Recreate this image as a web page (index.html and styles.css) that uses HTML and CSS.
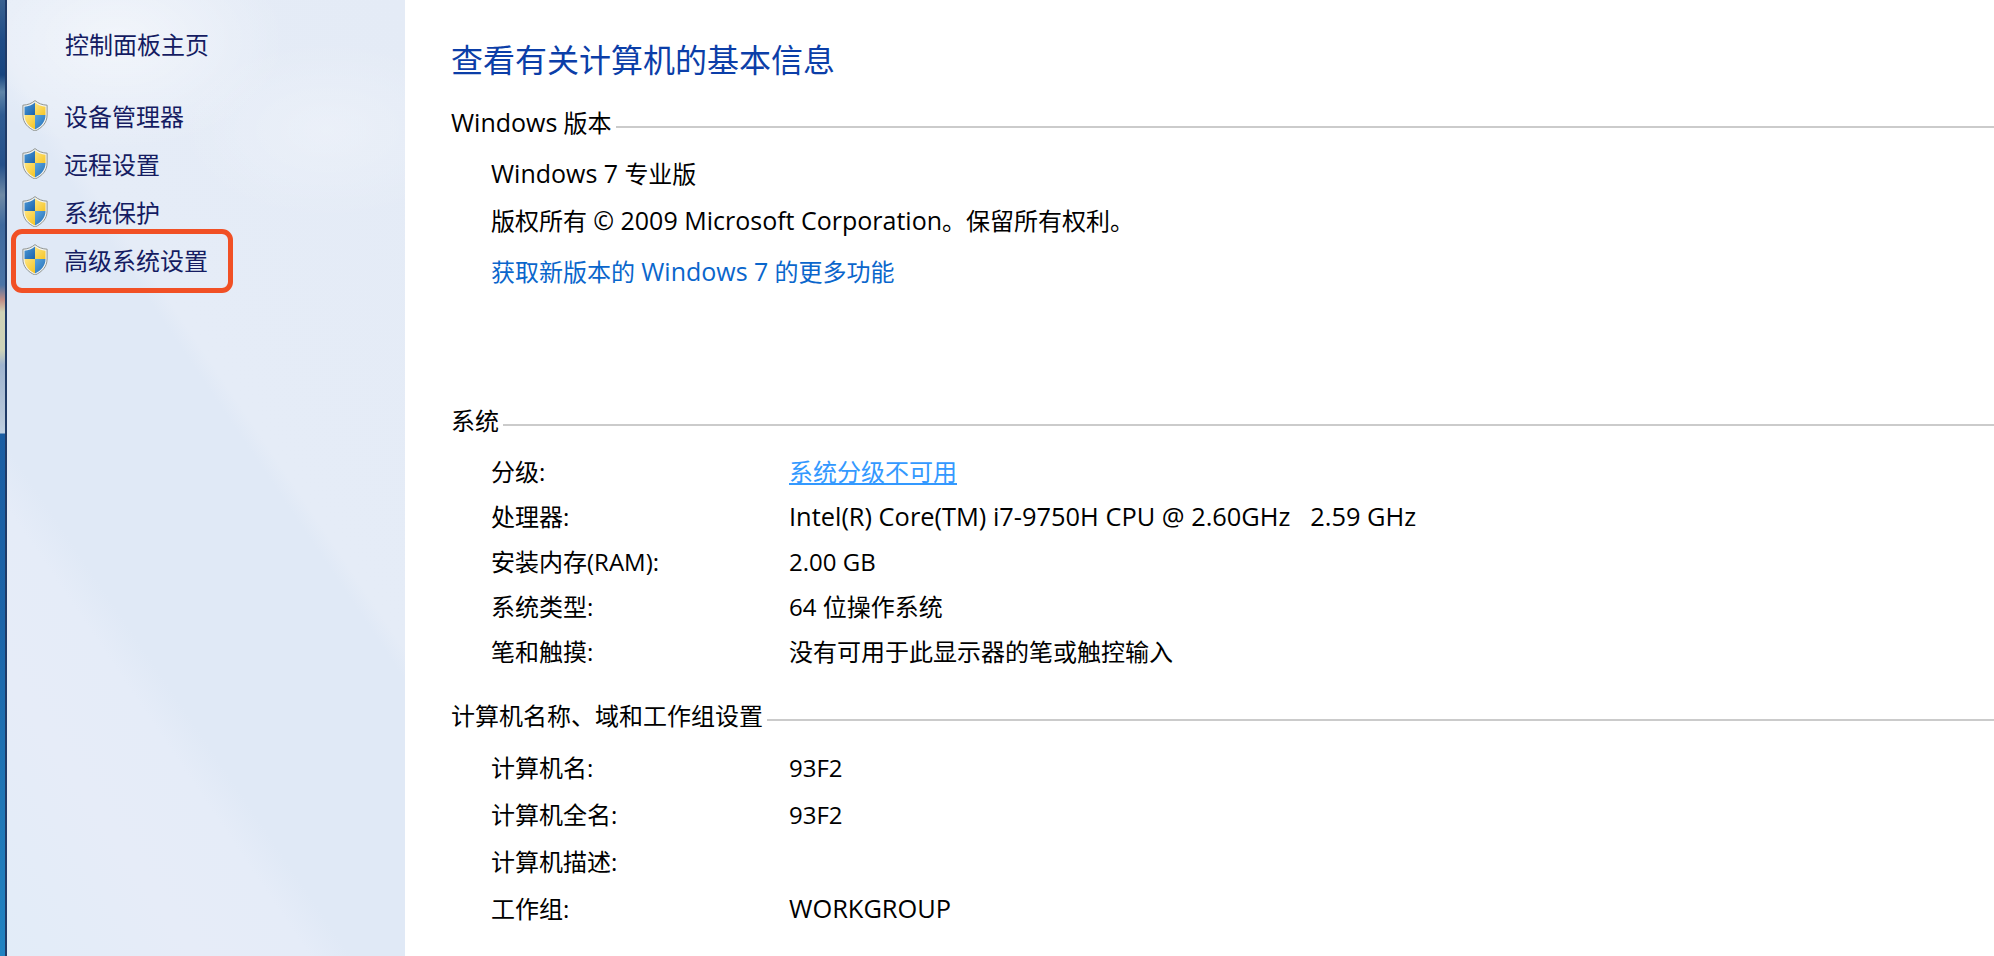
FILE: index.html
```html
<!DOCTYPE html>
<html lang="zh-CN">
<head>
<meta charset="utf-8">
<title>系统</title>
<link rel="stylesheet" href="styles.css">
</head>
<body>
<svg class="defs" width="0" height="0" aria-hidden="true">
  <defs>
    <clipPath id="shield-clip"><path d="M13 2.500C10 5 6.500 6.500 2.500 6.700V15C2.500 22 7 26.500 13 29.500C19 26.500 23.500 22 23.500 15V6.700C19.500 6.500 16 5 13 2.500Z"/></clipPath>
    <linearGradient id="sh-blue" x1="0" y1="0" x2="1" y2="1"><stop offset="0" stop-color="#5aa6e0"/><stop offset="1" stop-color="#1a63ad"/></linearGradient>
    <linearGradient id="sh-yellow" x1="0" y1="0" x2="1" y2="1"><stop offset="0" stop-color="#ffe88a"/><stop offset="1" stop-color="#f5c21e"/></linearGradient>
    <symbol id="shield" viewBox="0 0 26 31">
      <path d="M13 .6C9.600 3.500 5.500 5 .9 5.200V15C.9 23 6.200 28 13 31C19.800 28 25.100 23 25.100 15V5.200C20.500 5 16.400 3.500 13 .6Z" fill="#f2f3f1" stroke="#8f9490" stroke-width="1"/>
      <g clip-path="url(#shield-clip)">
        <rect x="0" y="0" width="13" height="15" fill="url(#sh-blue)"/>
        <rect x="13" y="0" width="13" height="15" fill="url(#sh-yellow)"/>
        <rect x="0" y="15" width="13" height="16" fill="url(#sh-yellow)"/>
        <rect x="13" y="15" width="13" height="16" fill="url(#sh-blue)"/>
      </g>
    </symbol>
  </defs>
</svg>
<div class="window">
  <div class="wallpaper"></div>
  <aside class="sidebar">
    <a class="home">控制面板主页</a>
    <ul class="tasks">
      <li class="task"><svg class="shield"><use href="#shield"/></svg><span>设备管理器</span></li>
      <li class="task"><svg class="shield"><use href="#shield"/></svg><span>远程设置</span></li>
      <li class="task"><svg class="shield"><use href="#shield"/></svg><span>系统保护</span></li>
      <li class="task marked"><svg class="shield"><use href="#shield"/></svg><span>高级系统设置</span></li>
    </ul>
  </aside>
  <main class="content">
    <h1 class="title">查看有关计算机的基本信息</h1>

    <h2 class="heading heading-edition"><span><i class="lat">Windows</i> 版本</span></h2>
    <div class="edition">
      <p class="edition-name"><i class="lat">Windows 7</i> 专业版</p>
      <p class="edition-copy">版权所有 <i class="lat">© 2009 Microsoft Corporation</i>。保留所有权利。</p>
      <p class="edition-link"><a class="link">获取新版本的 <i class="lat">Windows 7</i> 的更多功能</a></p>
    </div>

    <h2 class="heading heading-system"><span>系统</span></h2>
    <dl class="rows rows-system">
      <dt>分级:</dt><dd><a class="rating">系统分级不可用</a></dd>
      <dt>处理器:</dt><dd class="pre"><i class="lat wide">Intel(R) Core(TM) i7-9750H CPU @ 2.60GHz   2.59 GHz</i></dd>
      <dt>安装内存(RAM):</dt><dd>2.00 GB</dd>
      <dt>系统类型:</dt><dd>64 位操作系统</dd>
      <dt>笔和触摸:</dt><dd>没有可用于此显示器的笔或触控输入</dd>
    </dl>

    <h2 class="heading heading-name"><span>计算机名称、域和工作组设置</span></h2>
    <dl class="rows rows-name">
      <dt>计算机名:</dt><dd>93F2</dd>
      <dt>计算机全名:</dt><dd>93F2</dd>
      <dt>计算机描述:</dt><dd></dd>
      <dt>工作组:</dt><dd><i class="lat wide">WORKGROUP</i></dd>
    </dl>
  </main>
</div>
</body>
</html>
```
FILE: styles.css
```css
*, *::before, *::after { box-sizing: border-box; }
html, body { margin: 0; padding: 0; height: 100%; overflow: hidden; background: #fff; }
body { font-family: "Open Sans", "Noto Sans CJK SC", sans-serif; font-size: 24px; color: #000; }
.defs { position: absolute; }
.lat { font-style: normal; font-size: 25px; line-height: 1; }
.lat.wide { font-size: 25.4px; }

.window { display: flex; width: 1994px; height: 956px; }

.wallpaper {
  flex: 0 0 7px;
  border-right: 2px solid #1f3a66;
  background: linear-gradient(180deg,
    #3a6290 0, #1f4c86 40px, #17457f 75px, #5f85a8 92px, #2f5c92 115px, #24508a 165px,
    #6f8aa5 195px, #3f6a9e 225px, #4a74a6 285px, #c28e86 300px, #cfd2b6 312px, #ced3b8 350px,
    #9fb4cf 365px, #b8c8da 420px, #bfd0e2 433px,
    #1a5da2 434px, #1c64a8 620px, #1f76b6 800px, #2183c2 956px);
}

.sidebar {
  flex: 0 0 398px;
  color: #151c62;
  background:
    radial-gradient(ellipse 170px 110px at 110px 40px, rgba(255,255,255,.5), transparent),
    radial-gradient(ellipse 150px 90px at 320px 130px, rgba(255,255,255,.25), transparent),
    linear-gradient(56deg,
      #e2ecf8 0, #e6ecf8 18%, #e5ecf8 29%, #e0e9f6 33%, #e0e9f6 56%, #e5ecf7 58%, #e4ebf6 100%);
}
.home { display: block; margin: 30px 0 0 58px; line-height: 30px; }
.tasks { list-style: none; margin: 40px 0 0; padding: 0; display: flex; flex-direction: column; gap: 18px; }
.task { position: relative; display: flex; align-items: center; height: 30px; padding-left: 15px; }
.shield { width: 26px; height: 31px; flex: none; margin-right: 16px; }
.marked::after {
  content: "";
  position: absolute;
  left: 4px; top: -15px;
  width: 222px; height: 64px;
  border: 5px solid #f15025;
  border-radius: 11px;
}

.content { flex: 1; min-width: 0; padding-left: 46px; }
.title { margin: 40px 0 0; font-size: 32px; line-height: 40px; font-weight: 400; color: #0b3ea8; }

.heading { display: flex; align-items: center; margin: 0; font-size: 24px; line-height: 30px; font-weight: 400; color: #000; }
.heading span { flex: none; margin-right: 4px; }
.heading::after { content: ""; flex: 1; height: 2px; margin-top: 8px; background: #cbcbcb; }
.heading-edition { margin-top: 28px; }
.heading-system { margin-top: 119px; }
.heading-name { margin-top: 34px; }

.edition { margin: 21px 0 0 40px; }
.edition p { margin: 0; height: 30px; line-height: 30px; white-space: nowrap; }
.edition .edition-copy { margin-top: 17px; }
.edition .edition-link { margin-top: 21px; }
.link { color: #0a66cc; }
.rating { color: #3399ff; text-decoration: underline; }

.rows { display: grid; grid-template-columns: 298px 1fr; margin: 21px 0 0 40px; line-height: 30px; }
.rows dt, .rows dd { margin: 0; height: 30px; white-space: nowrap; }
.rows-system { row-gap: 15px; }
.rows-name { row-gap: 17px; margin-top: 22px; }
.rows .pre { white-space: pre; }
```
